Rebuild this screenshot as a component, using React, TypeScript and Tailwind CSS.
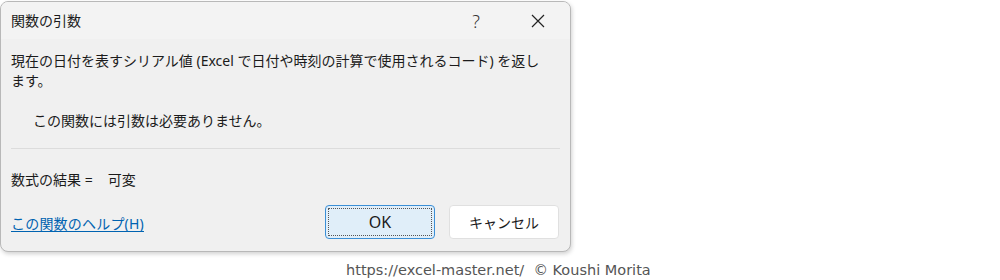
import React from "react";

const font = { fontFamily: '"Noto Sans", "Noto Sans CJK JP", sans-serif' };

export default function App() {
  return (
    <div className="w-[1000px] h-[280px] bg-white relative overflow-hidden" style={font}>
      <div className="flex flex-col w-[571px] h-[251px] ml-[0px] mt-[1px] border border-[#b8b8b8] rounded-[8px] bg-[#f0f0f0] shadow-[1px_2px_4px_rgba(0,0,0,0.18)] overflow-hidden text-[#1b1b1b]">
        {/* Title bar */}
        <div className="flex items-center h-[37px] bg-[#f3f3f3] pl-[10px] shrink-0">
          <div className="text-[14px] leading-[20px] flex-1">関数の引数</div>
          <div className="w-[20px] text-center text-[18px] font-light leading-[20px] text-[#333] mr-[45px]">?</div>
          <svg width="14" height="14" viewBox="0 0 14 14" className="mr-[25px]">
            <path d="M1 1 L13 13 M13 1 L1 13" stroke="#222" strokeWidth="1.2" />
          </svg>
        </div>
        {/* Body */}
        <div className="flex flex-col px-[10px] pt-[12px]">
          <p className="text-[14px] leading-[20px] pr-[4px]">
            現在の日付を表すシリアル値 (Excel で日付や時刻の計算で使用されるコード) を返し
            <br />
            ます。
          </p>
          <p className="text-[14px] leading-[20px] pl-[22px] mt-[20px]">この関数には引数は必要ありません。</p>
          <div className="h-px bg-[#dcdcdc] mt-[17px]" />
          <div className="flex text-[14px] leading-[20px] mt-[21px]">
            <span>数式の結果 =</span>
            <span className="ml-[15px]">可変</span>
          </div>
          <div className="flex items-center mt-[15px]">
            <a className="text-[14px] leading-[20px] text-[#0063b1] underline underline-offset-2 flex-1 mt-[4px] tracking-[0.2px]">この関数のヘルプ(H)</a>
            <button className="w-[110px] h-[34px] rounded-[4px] border-[1.5px] border-[#3b8fd6] bg-[#e0eef9] p-[2px] mr-[14px]">
              <div className="w-full h-full border border-dotted border-[#555] flex items-center justify-center text-[16px]">OK</div>
            </button>
            <button className="w-[110px] h-[34px] rounded-[4px] border border-[#e0e0e0] bg-white text-[14px] mr-[1px]">キャンセル</button>
          </div>
        </div>
      </div>
      <div
        className="absolute left-[346px] top-[260px] text-[14.5px] leading-[20px] text-[#555]"
        style={{ fontFamily: '"DejaVu Sans", sans-serif' }}
      >
        https://excel-master.net/&nbsp;&nbsp;© Koushi Morita
      </div>
    </div>
  );
}
